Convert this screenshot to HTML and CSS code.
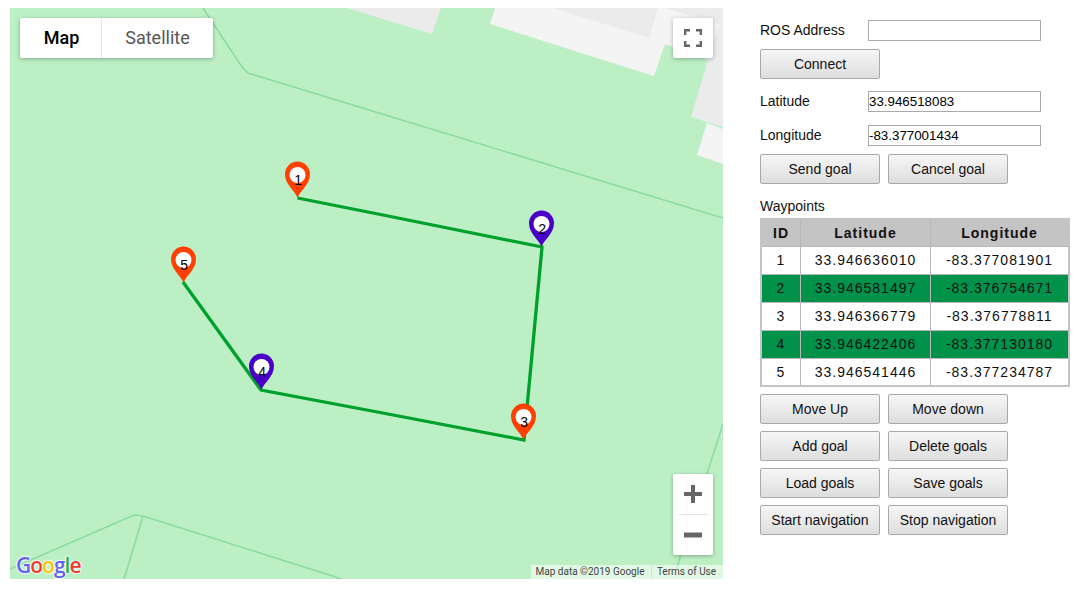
FILE: index.html
```html
<!DOCTYPE html>
<html lang="en-US">
	<head>
		<meta charset="utf-8">
		<title>Waypoints</title>
		<link rel="stylesheet" href="styles.css">
	</head>
	<body>
		<div class="map">
			<svg class="map-base" width="713" height="571" viewBox="10 8 713 571">
				<defs>
					<path id="pin" d="M0,0 C-2,-7 -12.5,-13 -12.5,-24 A12.5,12.5 0 1 1 12.5,-24 C12.5,-13 2,-7 0,0 Z"></path>
				</defs>
				<rect class="park" x="10" y="8" width="713" height="571"></rect>

				<polygon class="bldg-dark" points="347,8 441,8 432,34"></polygon>
				<polygon class="bldg-light" points="495,8 667,8 720,24 708,60 665,44 654,76 644,73 638,71 490,24"></polygon>
				<polygon class="bldg-dark" points="553,8 658,8 649,38"></polygon>
				<polygon class="bldg-dark" points="667,8 723,8 723,127 691,117 708,60 720,24"></polygon>
				<polygon class="bldg-light" points="707,123 723,129 723,164 697,155"></polygon>

				<polyline class="road" points="203,8 242,67 248,73 723,218"></polyline>
				<polyline class="road" points="10,569 127,518 135,515 143,516 342,579"></polyline>
				<polyline class="road" points="143,516 124,579"></polyline>
				<polyline class="road" points="723,424 676,570"></polyline>

				<polyline class="route" points="297.5,198 388,216 542,247 524,440 388,414 261,390 183,282"></polyline>

				<g transform="translate(297.5,198)">
					<use href="#pin" class="pin-orange"></use>
					<circle class="pin-hole" cy="-23" r="8"></circle>
					<text class="pin-label" x="0.7" y="-13">1</text>
				</g>
				<g transform="translate(541.5,247)">
					<use href="#pin" class="pin-purple"></use>
					<circle class="pin-hole" cy="-23" r="8"></circle>
					<text class="pin-label" x="0.7" y="-13">2</text>
				</g>
				<g transform="translate(523.5,440)">
					<use href="#pin" class="pin-orange"></use>
					<circle class="pin-hole" cy="-23" r="8"></circle>
					<text class="pin-label" x="0.7" y="-13">3</text>
				</g>
				<g transform="translate(261.5,390)">
					<use href="#pin" class="pin-purple"></use>
					<circle class="pin-hole" cy="-23" r="8"></circle>
					<text class="pin-label" x="0.7" y="-13">4</text>
				</g>
				<g transform="translate(183.5,283)">
					<use href="#pin" class="pin-orange"></use>
					<circle class="pin-hole" cy="-23" r="8"></circle>
					<text class="pin-label" x="0.7" y="-13">5</text>
				</g>
			</svg>

			<div class="map-type">
				<div class="map-type-btn map-type-active">Map</div>
				<div class="map-type-btn map-type-sat">Satellite</div>
			</div>

			<div class="fullscreen">
				<svg width="18" height="18" viewBox="0 0 18 18">
					<path class="ctrl-icon" d="M1.2,6 V1.2 H6 M12,1.2 H16.8 V6 M16.8,12 V16.8 H12 M6,16.8 H1.2 V12"></path>
				</svg>
			</div>

			<div class="zoom">
				<div class="zoom-btn">
					<svg width="18" height="18" viewBox="0 0 18 18">
						<path class="zoom-icon" d="M0,9 H18 M9,0 V18"></path>
					</svg>
				</div>
				<div class="zoom-line"></div>
				<div class="zoom-btn">
					<svg width="18" height="18" viewBox="0 0 18 18">
						<path class="zoom-icon-minus" d="M0,9 H18"></path>
					</svg>
				</div>
			</div>

			<div class="logo"><span class="c-blue">G</span><span class="c-red">o</span><span class="c-yellow">o</span><span class="c-blue">g</span><span class="c-green">l</span><span class="c-red">e</span></div>

			<div class="attrib">
				<span class="attrib-item attrib-data">Map data ©2019 Google</span>
				<span class="attrib-item attrib-terms">Terms of Use</span>
			</div>
		</div>

		<div class="panel">
			<div class="field field-first">
				<label class="field-label">ROS Address</label>
				<input class="field-input" type="text">
			</div>
			<div class="btn-row">
				<button class="btn">Connect</button>
			</div>
			<div class="field field-lat">
				<label class="field-label">Latitude</label>
				<input class="field-input" type="text" value="33.946518083">
			</div>
			<div class="field field-lng">
				<label class="field-label">Longitude</label>
				<input class="field-input" type="text" value="-83.377001434">
			</div>
			<div class="btn-row">
				<button class="btn">Send goal</button>
				<button class="btn">Cancel goal</button>
			</div>

			<p class="table-title">Waypoints</p>
			<table class="goals">
				<thead>
					<tr><th class="col-id">ID</th><th class="col-lat">Latitude</th><th>Longitude</th></tr>
				</thead>
				<tbody>
					<tr><td>1</td><td>33.946636010</td><td>-83.377081901</td></tr>
					<tr class="row-on"><td>2</td><td>33.946581497</td><td>-83.376754671</td></tr>
					<tr><td>3</td><td>33.946366779</td><td>-83.376778811</td></tr>
					<tr class="row-on"><td>4</td><td>33.946422406</td><td>-83.377130180</td></tr>
					<tr class="row-last"><td>5</td><td>33.946541446</td><td>-83.377234787</td></tr>
				</tbody>
			</table>

			<div class="btn-grid">
				<button class="btn">Move Up</button>
				<button class="btn">Move down</button>
				<button class="btn">Add goal</button>
				<button class="btn">Delete goals</button>
				<button class="btn">Load goals</button>
				<button class="btn">Save goals</button>
				<button class="btn">Start navigation</button>
				<button class="btn">Stop navigation</button>
			</div>
		</div>
	</body>
</html>
```

FILE: styles.css
```css
body {
	margin: 8px 0 0 10px;
	display: flex;
	gap: 37px;
	align-items: flex-start;
	font-family: "Liberation Sans", Arial, sans-serif;
	font-size: 14px;
	color: #111;
	background: white;
}

/* map */
.map {
	position: relative;
	width: 713px;
	height: 571px;
	overflow: hidden;
	flex: none;
}
.map-base {
	display: block;
}
.park {
	fill: #bcf0c4;
}
.bldg-light {
	fill: #f4f4f4;
}
.bldg-dark {
	fill: #ebebeb;
}
.road {
	fill: none;
	stroke: #8cdba4;
	stroke-width: 1.6;
}
.route {
	fill: none;
	stroke: #00a02c;
	stroke-width: 3.3;
}
.pin-orange {
	fill: #ff4000;
}
.pin-purple {
	fill: #4b00c8;
}
.pin-hole {
	fill: white;
}
.pin-label {
	font-family: "Liberation Sans", Arial, sans-serif;
	font-size: 14px;
	text-anchor: middle;
	fill: black;
}

.map-type {
	position: absolute;
	left: 10px;
	top: 10px;
	height: 40px;
	display: flex;
	background: white;
	border-radius: 2px;
	box-shadow: 0 1px 4px rgba(0, 0, 0, 0.3);
	font-family: Roboto, sans-serif;
	font-size: 18px;
	line-height: 40px;
	text-align: center;
}
.map-type-btn {
	flex: none;
}
.map-type-active {
	box-sizing: border-box;
	width: 82px;
	padding-left: 2px;
	font-weight: 500;
	color: black;
	border-right: 1px solid #e6e6e6;
}
.map-type-sat {
	width: 111px;
	color: #565656;
}

.fullscreen {
	position: absolute;
	left: 663px;
	top: 10px;
	width: 40px;
	height: 40px;
	display: flex;
	align-items: center;
	justify-content: center;
	background: white;
	border-radius: 2px;
	box-shadow: 0 1px 4px rgba(0, 0, 0, 0.3);
}
.ctrl-icon {
	fill: none;
	stroke: #666;
	stroke-width: 2.4;
}

.zoom {
	position: absolute;
	left: 663px;
	top: 466px;
	width: 40px;
	height: 81px;
	background: white;
	border-radius: 2px;
	box-shadow: 0 1px 4px rgba(0, 0, 0, 0.3);
}
.zoom-btn {
	height: 40px;
	display: flex;
	align-items: center;
	justify-content: center;
}
.zoom-line {
	height: 1px;
	margin: 0 5px;
	background: #e6e6e6;
}
.zoom-icon {
	fill: none;
	stroke: #666;
	stroke-width: 4;
}
.zoom-icon-minus {
	fill: none;
	stroke: #666;
	stroke-width: 5;
}

.logo {
	position: absolute;
	left: 6px;
	bottom: 0;
	font-family: "Open Sans", sans-serif;
	font-size: 21px;
	font-weight: 600;
	line-height: 28px;
	letter-spacing: -1px;
	text-shadow: 0 0 2px white, 0 0 2px white, 0 0 2px white, 0 0 2px white;
}
.c-blue {
	color: #6262f0;
}
.c-red {
	color: #ee3a2a;
}
.c-yellow {
	color: #f5c400;
}
.c-green {
	color: #28b050;
}

.attrib {
	position: absolute;
	right: 0;
	bottom: 0;
	height: 14px;
	display: flex;
	gap: 1px;
	font-family: Roboto, sans-serif;
	font-size: 10px;
	line-height: 14px;
	color: #444;
}
.attrib-item {
	box-sizing: border-box;
	padding-right: 2px;
	background: rgba(255, 255, 255, 0.55);
	text-align: center;
}
.attrib-data {
	width: 120px;
}
.attrib-terms {
	width: 71px;
}

/* side panel */
.panel {
	width: 310px;
	flex: none;
	padding-top: 12px;
}
.field {
	display: flex;
	align-items: center;
}
.field-lat {
	margin-top: 12px;
}
.field-lng {
	margin-top: 13px;
}
.field-label {
	width: 108px;
	flex: none;
	margin-bottom: 2px;
}
.field-input {
	box-sizing: border-box;
	width: 173px;
	height: 21px;
	padding: 0;
	border: 1px solid #a9a9a9;
	font-family: "Liberation Sans", Arial, sans-serif;
	font-size: 13.33px;
	color: black;
}
.btn-row {
	display: flex;
	gap: 8px;
	margin-top: 8px;
}
.btn {
	box-sizing: border-box;
	width: 120px;
	height: 30px;
	padding: 0;
	border: 1px solid #a9a9a9;
	border-radius: 2px;
	background: linear-gradient(#f6f6f6, #dedede);
	font-family: "Liberation Sans", Arial, sans-serif;
	font-size: 14px;
	color: #111;
}
.table-title {
	margin: 14px 0 4px 0;
	line-height: 16px;
}
.goals {
	box-sizing: border-box;
	width: 310px;
	table-layout: fixed;
	border-spacing: 0;
	border: 2px solid #c4c4c4;
	letter-spacing: 1px;
	text-align: center;
}
.goals th {
	height: 26px;
	padding: 0;
	background: #c4c4c4;
	font-weight: bold;
	border-left: 1px solid #b8b8b8;
}
.goals td {
	height: 26px;
	padding: 0 0 1px 0;
	border-top: 1px solid #b8b8b8;
	border-left: 1px solid #b8b8b8;
}
.goals th:first-child, .goals td:first-child {
	border-left: none;
}
.col-id {
	width: 38px;
}
.col-lat {
	width: 129px;
}
.goals .row-last td {
	height: 26px;
	padding-bottom: 0;
}
.row-on td {
	background: #00924a;
}
.btn-grid {
	display: grid;
	grid-template-columns: 120px 120px;
	gap: 7px 8px;
	margin-top: 7px;
}
```
